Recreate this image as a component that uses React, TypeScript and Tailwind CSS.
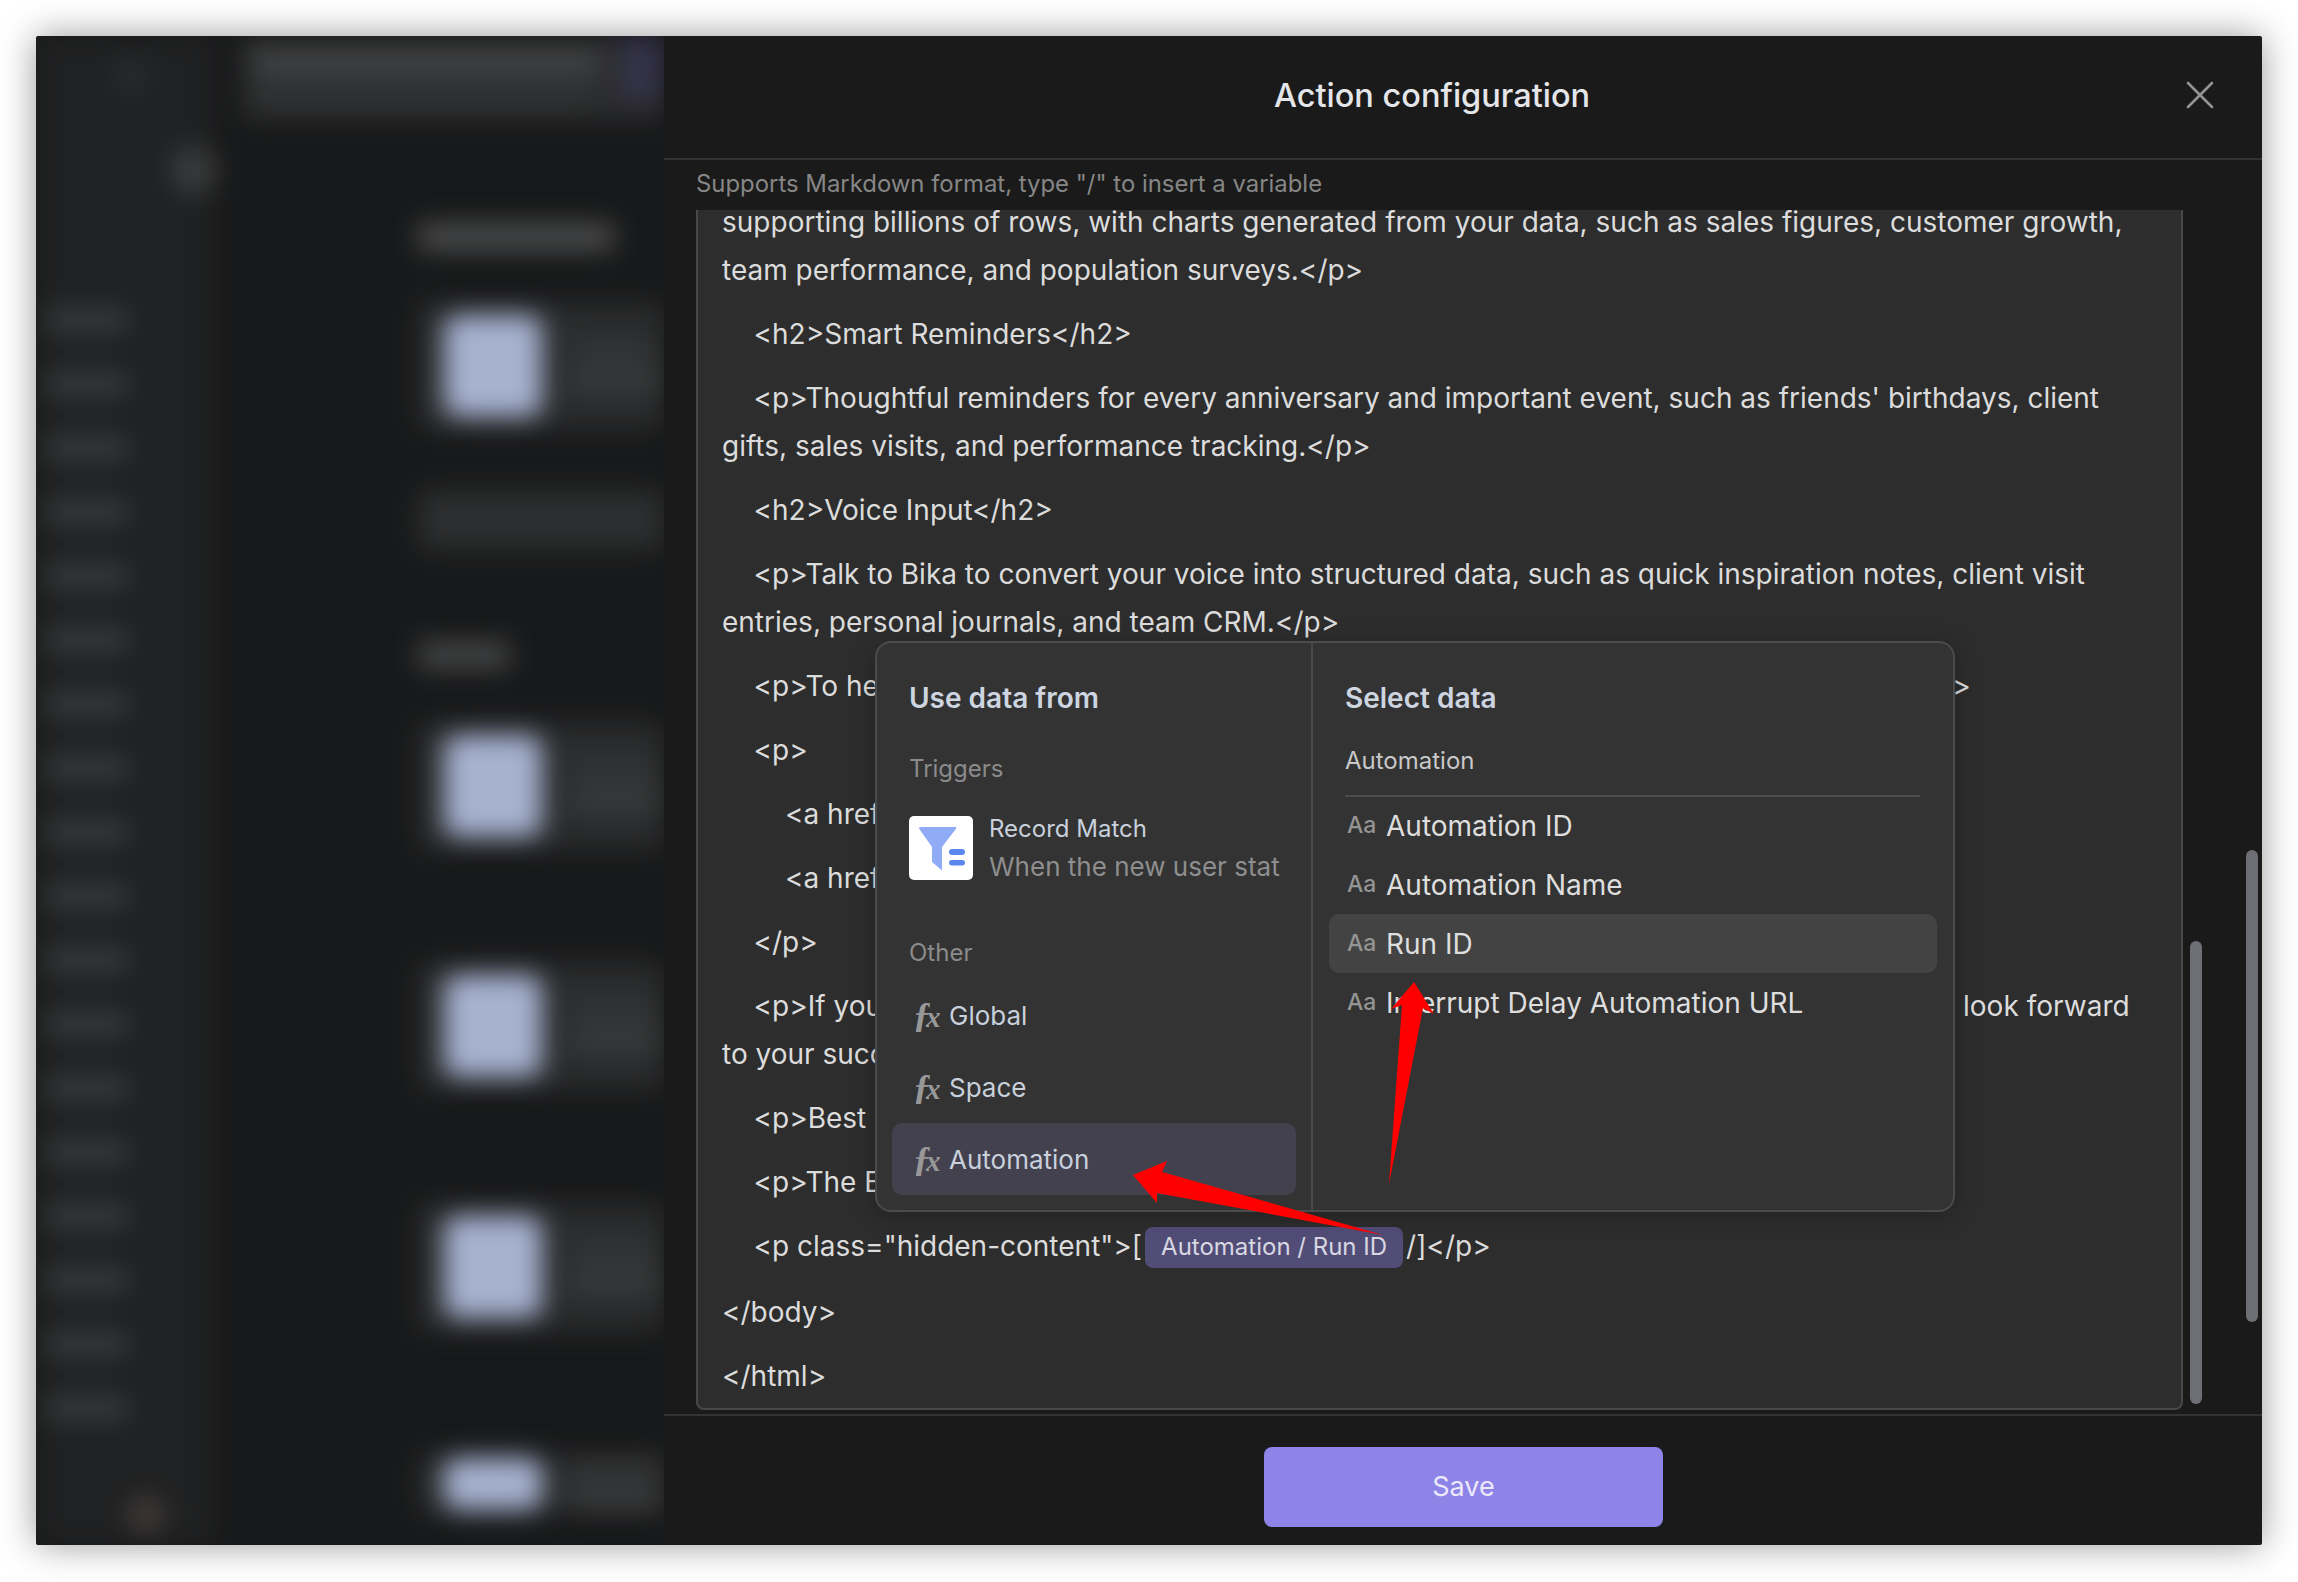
import React from "react";
import { X } from "lucide-react";

const FONT = "[font-family:Inter,'Noto_Sans',sans-serif]";

function Para({ children, indent = 0 }: { children: React.ReactNode; indent?: number }) {
  const pad = "\u00a0".repeat(indent);
  return (
    <p className="mb-4 leading-[48px]">
      {pad}
      {children}
    </p>
  );
}

function BlurCard({ short }: { short?: boolean }) {
  return (
    <div className={`flex items-center bg-[#2a2b2c] pl-[26px] ${short ? "h-[60px]" : "h-[128px]"}`}>
      <div className={`w-[98px] rounded-[14px] bg-[#a6b2d0] ${short ? "h-[52px]" : "h-[102px]"}`} />
      <div className="ml-[28px] flex flex-1 flex-col gap-2">
        <div className="h-[22px] bg-[#343536]" />
        <div className="h-[22px] bg-[#3a3b3c]" />
      </div>
    </div>
  );
}

function BlurredPage() {
  const bars = Array.from({ length: 18 });
  return (
    <div className="h-full w-[628px] shrink-0 overflow-hidden bg-[#18191a]">
      <div className="flex h-full w-full blur-[13px]">
        <div className="flex w-[178px] shrink-0 flex-col bg-[#202122] pl-[8px]">
          <div className="ml-[70px] mt-[24px] h-[32px] w-[32px] rounded-full bg-[#2b2c2d]" />
          <div className="ml-[126px] mt-[54px] h-[48px] w-[48px] rounded-full bg-[#3a3b3c]" />
          <div className="mt-[114px] flex flex-col gap-[40px]">
            {bars.map((_, i) => (
              <div key={i} className="h-[24px] w-[84px] bg-[#38393a]" />
            ))}
          </div>
          <div className="ml-[84px] mt-[76px] h-[38px] w-[36px] rounded-full bg-[#433b39]" />
        </div>
        <div className="flex min-w-0 flex-1 flex-col">
          <div className="ml-[28px] flex h-[84px] shrink-0 bg-[#2b2c2d]">
            <div className="flex flex-1 flex-col justify-center gap-[14px] pl-[8px]">
              <div className="h-[22px] w-[350px] bg-[#444546]" />
              <div className="h-[18px] w-[340px] bg-[#333435]" />
            </div>
            <div className="h-[64px] w-[44px] bg-[#35334a]" />
          </div>
          <div className="ml-[204px] flex flex-1 flex-col">
            <div className="mt-[103px] h-[28px] w-[196px] bg-[#4a4b4c]" />
            <div className="mt-[51px]">
              <BlurCard />
            </div>
            <div className="mt-[60px] h-[60px] bg-[#2d2e2f]" />
            <div className="mt-[91px] h-[28px] w-[92px] bg-[#444546]" />
            <div className="mt-[53px]">
              <BlurCard />
            </div>
            <div className="mt-[112px]">
              <BlurCard />
            </div>
            <div className="mt-[113px]">
              <BlurCard />
            </div>
            <div className="mt-[123px]">
              <BlurCard short />
            </div>
          </div>
        </div>
      </div>
    </div>
  );
}

function FxRow({ label, active }: { label: string; active?: boolean }) {
  return (
    <div className={`flex h-[72px] items-center gap-[10px] rounded-[10px] pl-[21px] ${active ? "bg-[#44414f]" : ""}`}>
      <span className="w-[26px] whitespace-nowrap text-[36px] font-bold italic leading-none text-[#989898] [font-family:'Liberation_Serif',serif]">
        <span className="tracking-[-5px]">ƒ</span>
        <span className="text-[29px]">x</span>
      </span>
      <span className="text-[26px] text-[#c8d0dc]">{label}</span>
    </div>
  );
}

function DataRow({ label, active }: { label: string; active?: boolean }) {
  return (
    <div className={`flex h-[59px] items-center rounded-[10px] pl-[18px] ${active ? "bg-[#434343]" : ""}`}>
      <span className="w-[39px] text-[23px] font-medium text-[#949494]">Aa</span>
      <span className="text-[28px] text-[#dedede]">{label}</span>
    </div>
  );
}

function Funnel() {
  return (
    <svg viewBox="0 0 64 64" className="h-[64px] w-[64px] shrink-0 rounded-[5px] bg-white">
      <path d="M10 12.5 Q10 11 11.5 11 H46.5 Q48 11 47.2 12.5 L33 31 V54.5 L23 46 V31 Z" fill="#90acf6" />
      <rect x="40" y="33" width="16" height="6" rx="3" fill="#5c87ee" />
      <rect x="40" y="44" width="16" height="5.5" rx="2.75" fill="#5c87ee" />
    </svg>
  );
}

function Popover() {
  return (
    <div className="absolute left-[211px] top-[481px] flex h-[571px] w-[1080px] rounded-[16px] border-2 border-[#4b4b4b] bg-[#333333] shadow-[0_4px_24px_rgba(0,0,0,0.25)]">
      <div className="flex w-[436px] shrink-0 flex-col border-r-2 border-[#494949] px-[15px]">
        <h3 className="ml-[17px] mt-[37px] text-[28px] font-semibold leading-[36px] text-[#cdd5e0]">Use data from</h3>
        <div className="ml-[17px] mt-[36px] text-[24px] leading-[34px] text-[#8b8b8b]">Triggers</div>
        <div className="ml-[17px] mt-[24px] flex items-center gap-[16px] overflow-hidden">
          <Funnel />
          <div className="min-w-0 whitespace-nowrap">
            <div className="text-[24px] leading-[38px] text-[#c8d0dc]">Record Match</div>
            <div className="overflow-hidden text-[26px] leading-[38px] text-[#8e8e8e]">When the new user stat</div>
          </div>
        </div>
        <div className="ml-[17px] mt-[50px] text-[24px] leading-[34px] text-[#8b8b8b]">Other</div>
        <div className="mt-[9px] flex flex-col">
          <FxRow label="Global" />
          <FxRow label="Space" />
          <FxRow label="Automation" active />
        </div>
      </div>
      <div className="flex min-w-0 flex-1 flex-col px-[16px]">
        <h3 className="ml-[16px] mt-[37px] text-[28px] font-semibold leading-[36px] text-[#cdd5e0]">Select data</h3>
        <div className="ml-[16px] mt-[28px] text-[24px] leading-[34px] text-[#c8c8c8]">Automation</div>
        <div className="ml-[16px] mr-[17px] mt-[17px] h-[2px] bg-[#4d4d4d]" />
        <div className="mt-[-1px] flex flex-col">
          <DataRow label="Automation ID" />
          <DataRow label="Automation Name" />
          <DataRow label="Run ID" active />
          <DataRow label="Interrupt Delay Automation URL" />
        </div>
      </div>
    </div>
  );
}

function Arrows() {
  return (
    <svg className="pointer-events-none absolute left-0 top-0 h-[1582px] w-[2298px]" viewBox="0 0 2298 1582">
      <path d="M1133 1175 L1167 1161 L1162 1172 L1383 1235 L1157 1193 L1157 1203 Z" fill="#ff0000" />
      <path d="M1414 982 L1434 1014 L1423 1008 L1389 1184 L1402 1005 L1391 1009 Z" fill="#ff0000" />
    </svg>
  );
}

function Editor() {
  return (
    <div className="relative ml-[32px] mr-[79px] flex-1 overflow-hidden rounded-b-[8px] border-x-2 border-b-2 border-[#484848] bg-[#2d2d2d]">
      <div className="mt-[-12px] pl-[24px] pr-[26px] text-[28px] text-[#dcdcdc]">
        <Para>supporting billions of rows, with charts generated from your data, such as sales figures, customer growth, team performance, and population surveys.&lt;/p&gt;</Para>
        <Para indent={4}>&lt;h2&gt;Smart Reminders&lt;/h2&gt;</Para>
        <Para indent={4}>&lt;p&gt;Thoughtful reminders for every anniversary and important event, such as friends' birthdays, client gifts, sales visits, and performance tracking.&lt;/p&gt;</Para>
        <Para indent={4}>&lt;h2&gt;Voice Input&lt;/h2&gt;</Para>
        <Para indent={4}>&lt;p&gt;Talk to Bika to convert your voice into structured data, such as quick inspiration notes, client visit entries, personal journals, and team CRM.&lt;/p&gt;</Para>
        <Para indent={4}>&lt;p&gt;To help you get started, we have prepared a few guides and resources for you here&lt;/p&gt;</Para>
        <Para indent={4}>&lt;p&gt;</Para>
        <Para indent={8}>&lt;a href="https://bika.ai/help"&gt;Help&lt;/a&gt;</Para>
        <Para indent={8}>&lt;a href="https://bika.ai/template"&gt;Templates&lt;/a&gt;</Para>
        <Para indent={4}>&lt;/p&gt;</Para>
        <Para indent={4}>&lt;p&gt;If you have any other questions please do feel free to contact our team at any time. We look forward to your success with Bika.&lt;/p&gt;</Para>
        <Para indent={4}>&lt;p&gt;Best regards,&lt;/p&gt;</Para>
        <Para indent={4}>&lt;p&gt;The Bika Team&lt;/p&gt;</Para>
        <p className="mb-[18px] flex h-[48px] items-center">
          {"\u00a0\u00a0\u00a0\u00a0"}&lt;p class="hidden-content"&gt;[
          <span className="mx-[3px] mt-[2px] flex h-[41px] items-center rounded-[8px] bg-[#524d77] px-[16px] text-[24px] text-[#d8d8e2]">Automation / Run ID</span>
          /]&lt;/p&gt;
        </p>
        <Para>&lt;/body&gt;</Para>
        <Para>&lt;/html&gt;</Para>
      </div>
    </div>
  );
}

function Modal() {
  return (
    <div className="relative flex min-w-0 flex-1 flex-col bg-[#1a1a1a]">
      <header className="flex h-[124px] shrink-0 items-center justify-center border-b-2 border-[#333333] pb-[2px] pr-[62px]">
        <h2 className="text-[32.5px] font-medium text-[#e4e6ea]">Action configuration</h2>
        <X className="absolute right-[38px] top-[35px] h-[48px] w-[48px] text-[#949494]" strokeWidth={1.3} />
      </header>
      <div className="relative flex min-h-0 flex-1 flex-col">
        <div className="mx-[32px] flex h-[50px] shrink-0 items-center pb-[2px] text-[23.9px] text-[#868686]">Supports Markdown format, type "/" to insert a variable</div>
        <Editor />
        <div className="h-[4px] shrink-0" />
        <div className="absolute right-[60px] top-[781px] h-[463px] w-[12px] rounded-full bg-[#6e6f74]" />
        <div className="absolute right-[4px] top-[690px] h-[472px] w-[12px] rounded-full bg-[#6e6f74]" />
        <Popover />
      </div>
      <footer className="flex h-[131px] shrink-0 items-center justify-center border-t-2 border-[#333333] pt-[12px]">
        <button className="ml-[1px] h-[80px] w-[399px] rounded-[8px] bg-[#8e83e7] pt-[2px] text-[27px] text-[#ece9fb]">Save</button>
      </footer>
    </div>
  );
}

export default function App() {
  return (
    <div className={`relative h-[1582px] w-[2298px] overflow-hidden bg-white p-[36px] ${FONT}`}>
      <div className="flex h-[1509px] w-[2226px] overflow-hidden rounded-[2px] shadow-[0_0_36px_rgba(0,0,0,0.4)]">
        <BlurredPage />
        <Modal />
      </div>
      <Arrows />
    </div>
  );
}
